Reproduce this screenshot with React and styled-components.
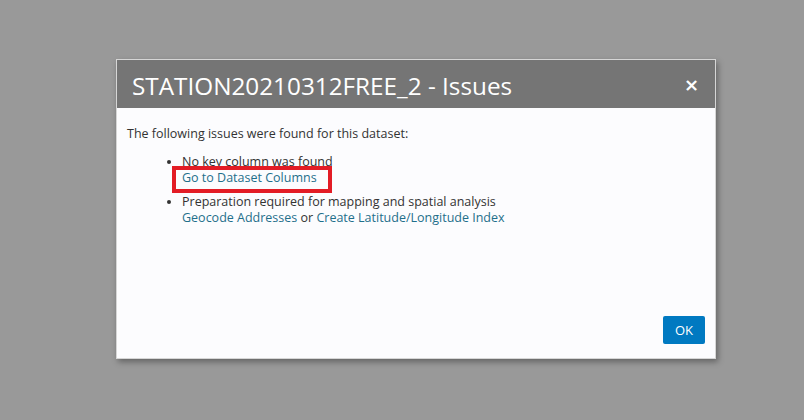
import React from "react";
import styled, { createGlobalStyle } from "styled-components";

const Global = createGlobalStyle`
  html, body { margin: 0; padding: 0; }
  body {
    background: #999999;
    width: 804px;
    height: 420px;
    overflow: hidden;
    font-family: "Open Sans", "Liberation Sans", sans-serif;
  }
`;

const Page = styled.div`
  width: 804px;
  height: 420px;
  display: flex;
  justify-content: flex-start;
  align-items: flex-start;
  padding: 59px 0 0 116px;
  box-sizing: border-box;
`;

const Dialog = styled.div`
  width: 600px;
  height: 300px;
  box-sizing: border-box;
  border: 1px solid #d6d6d6;
  background: #fcfcfe;
  display: flex;
  flex-direction: column;
  box-shadow: 2px 3px 6px rgba(0, 0, 0, 0.35);
`;

const Header = styled.div`
  height: 48px;
  background: #757575;
  display: flex;
  align-items: center;
  justify-content: space-between;
  padding: 2px 16px 0 15px;
  box-sizing: border-box;
`;

const Title = styled.h1`
  margin: 0;
  font-weight: 400;
  font-size: 24.3px;
  color: #ffffff;
`;

const Close = styled.button`
  border: 0;
  background: none;
  color: #ffffff;
  font-size: 18px;
  font-weight: 700;
  padding: 0;
  line-height: 1;
  font-family: "DejaVu Sans", sans-serif;
  cursor: pointer;
`;

const Body = styled.div`
  flex: 1;
  padding: 18px 10px 0 10px;
  font-size: 12.5px;
  color: #333333;
  line-height: 16px;
`;

const Intro = styled.p`
  margin: 0 0 12px 0;
`;

const IssueList = styled.ul`
  margin: 0;
  padding-left: 55px;
  list-style: disc;
`;

const Issue = styled.li`
  margin-bottom: 8px;
`;

const Link = styled.a`
  color: #1f6f8b;
  text-decoration: none;
  cursor: pointer;
`;

const Marked = styled.span`
  position: relative;
  &::after {
    content: "";
    position: absolute;
    left: -10px;
    right: -15px;
    top: -3px;
    bottom: -7px;
    border: 4px solid #e31c25;
  }
`;

const Footer = styled.div`
  display: flex;
  justify-content: flex-end;
  padding: 0 10px 14px 0;
`;

const OkButton = styled.button`
  background: #0079c1;
  color: #ffffff;
  border: 0;
  border-radius: 2px;
  width: 42px;
  height: 28px;
  font-size: 13px;
  font-family: "Open Sans", "Liberation Sans", sans-serif;
  cursor: pointer;
`;

export default function App() {
  return (
    <>
      <Global />
      <Page>
        <Dialog>
          <Header>
            <Title>STATION20210312FREE_2 - Issues</Title>
            <Close aria-label="close">×</Close>
          </Header>
          <Body>
            <Intro>The following issues were found for this dataset:</Intro>
            <IssueList>
              <Issue>
                No key column was found
                <br />
                <Marked>
                  <Link>Go to Dataset Columns</Link>
                </Marked>
              </Issue>
              <Issue>
                Preparation required for mapping and spatial analysis
                <br />
                <Link>Geocode Addresses</Link> or{" "}
                <Link>Create Latitude/Longitude Index</Link>
              </Issue>
            </IssueList>
          </Body>
          <Footer>
            <OkButton>OK</OkButton>
          </Footer>
        </Dialog>
      </Page>
    </>
  );
}
